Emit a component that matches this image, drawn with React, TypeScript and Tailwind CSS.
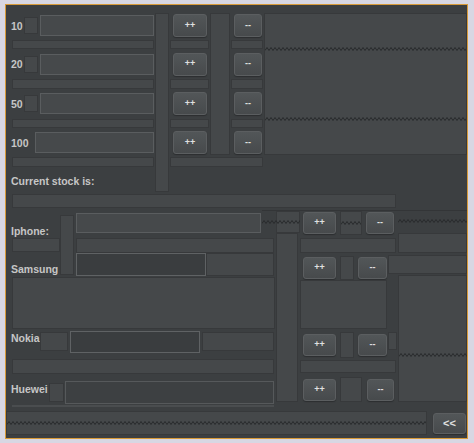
import React from "react";

const PANEL = "bg-[#45484a] border border-[#37393b]";
const FIELD = "bg-[#46494b] border border-[#5a5d5f]";
const DFIELD = "bg-[#3a3d3f] border border-[#5f6264]";
const LABEL = "text-[10.5px] leading-[14px] font-bold text-[#c6c6c6] whitespace-nowrap";

function Zig({ w, className = "" }: { w: number; className?: string }) {
  const pts: string[] = [];
  for (let x = 0, i = 0; x <= w + 2; x += 2, i++) pts.push(`${x},${i % 2 ? 1.5 : 4.5}`);
  return (
    <svg width={w} height={6} className={"block shrink-0 " + className}>
      <polyline points={pts.join(" ")} fill="none" stroke="#282a2c" strokeWidth={1} />
    </svg>
  );
}

function Btn({ t, className = "", big = false }: { t: string; className?: string; big?: boolean }) {
  return (
    <div
      className={
        "flex shrink-0 items-center justify-center rounded-[3px] border border-[#5b5e60] bg-linear-to-b from-[#525658] to-[#474a4c] font-bold text-[#e0e0e0] shadow-[0_1px_1px_#2c2e30] " +
        (big ? "text-[11px] " : "text-[9px] ") +
        className
      }
    >
      {t}
    </div>
  );
}

const denoms = [
  { label: "10", row: "row-[2/3]" },
  { label: "20", row: "row-[4/5]" },
  { label: "50", row: "row-[6/7]" },
  { label: "100", row: "row-[8/9]" },
];

const bars = [
  { row: "row-[3/4]", h: "h-[9px]" },
  { row: "row-[5/6]", h: "h-[10px]" },
  { row: "row-[7/8]", h: "h-[9px]" },
];

export default function App() {
  return (
    <div className="h-[443px] w-[474px] bg-[#d8d7e3] pb-[4px] pl-[5px] pr-[6px] pt-[4px] font-['Liberation_Sans',Arial,sans-serif]">
      <div className="flex h-full w-full flex-col border border-[#d89a38] bg-[#3c3f41]">
        {/* Section 1: denominations */}
        <div className="grid h-[188px] shrink-0 grid-cols-[148px_16px_40px_21px_33px_203px] grid-rows-[8px_25px_13px_26px_14px_25px_14px_25px_13px_25px]">
          {denoms.map((d) => (
            <React.Fragment key={d.label}>
              <div className={`col-[1/2] ${d.row} flex items-center pl-[5px]`}>
                {d.label === "100" ? (
                  <span className={`${LABEL} w-[24px]`}>{d.label}</span>
                ) : (
                  <>
                    <span className={`${LABEL} w-[13px]`}>{d.label}</span>
                    <div className={`${PANEL} h-[17px] w-[14px]`} />
                    <div className="w-[2px]" />
                  </>
                )}
                <div className={`${FIELD} h-[21px] flex-1`} />
              </div>
              <Btn t="++" className={`col-[3/4] ${d.row} ml-[3px] h-[23px] w-[34px] self-center`} />
              <Btn t="--" className={`col-[5/6] ${d.row} ml-[3px] h-[23px] w-[28px] self-center`} />
            </React.Fragment>
          ))}
          {bars.map((b) => (
            <React.Fragment key={b.row}>
              <div className={`col-[1/2] ${b.row} ${b.h} ${PANEL} ml-[6px] self-center`} />
              <div className={`col-[3/4] ${b.row} ${b.h} ${PANEL} mr-[1px] self-center`} />
              <div className={`col-[5/6] ${b.row} ${b.h} ${PANEL} mr-[1px] self-center`} />
            </React.Fragment>
          ))}
          <div className={`col-[1/2] row-[9/10] h-[10px] ${PANEL} ml-[6px] self-center`} />
          <div className={`col-[3/6] row-[9/10] h-[10px] ${PANEL} mr-[1px] self-center`} />
          <div className={`col-[2/3] row-[2/11] ${PANEL} mb-[1px] ml-[1px] w-[14px]`} />
          <div className={`col-[4/5] row-[2/9] ${PANEL} w-[20px]`} />
          <div className={`col-[6/7] row-[2/9] ${PANEL} flex flex-col`}>
            <Zig w={201} className="mt-[32px]" />
            <Zig w={201} className="mt-[64px]" />
          </div>
          <div className={`col-[1/5] row-[10/11] flex items-center pl-[5px]`}>
            <span className={LABEL}>Current stock is:</span>
          </div>
        </div>

        {/* Section 2: bar */}
        <div className="flex h-[15px] shrink-0 items-center">
          <div className={`${PANEL} ml-[6px] h-[14px] w-[384px]`} />
        </div>

        {/* Section 3: stock */}
        <div className="grid h-[197px] shrink-0 grid-cols-[54px_16px_186px_14px_24px_97px_70px] grid-rows-[29px_16px_27px_50px_27px_19px_29px]">
          {/* Iphone row */}
          <div className="col-[4/8] row-[1/2] mt-[2px] h-px bg-[#333537]" />
          <div className={`col-[2/3] row-[1/4] ${PANEL} mt-[7px] h-[60px] w-[14px]`} />
          <div className={`col-[3/4] row-[1/2] ${FIELD} mt-[5px] h-[20px] w-[185px]`} />
          <div className={`col-[5/6] row-[1/2] ${PANEL} mt-[3px] h-[22px] w-[24px]`} />
          <div className="col-[4/6] row-[1/2] pt-[11px]">
            <Zig w={38} />
          </div>
          <div className="col-[6/7] row-[1/2] flex items-center">
            <Btn t="++" className="ml-[3px] h-[22px] w-[33px]" />
            <div className={`${PANEL} ml-[4px] flex h-[24px] w-[22px] items-center overflow-hidden`}>
              <Zig w={22} />
            </div>
            <Btn t="--" className="ml-[4px] h-[22px] w-[28px]" />
          </div>
          <div className="col-[7/8] row-[1/2] pl-[1px] pt-[10px]">
            <Zig w={69} />
          </div>

          {/* bar row */}
          <div className={`col-[1/2] row-[2/3] ${PANEL} ml-[6px] mt-[1px] h-[14px] w-[48px]`} />
          <div className={`col-[3/5] row-[2/3] ${PANEL} mt-[1px] h-[15px] w-[198px]`} />
          <div className={`col-[6/7] row-[2/3] ${PANEL} mt-[1px] h-[15px] w-[96px]`} />
          <div className={`col-[7/8] row-[2/3] ${PANEL} -mt-[4px] ml-[1px] h-[20px]`} />
          <div className={`col-[5/6] row-[2/8] ${PANEL} -mt-[4px] mb-[3px] w-[22px]`} />

          {/* Samsung row */}
          <div className="col-[3/5] row-[3/4] flex items-start">
            <div className={`${DFIELD} h-[23px] w-[130px]`} />
            <div className={`${PANEL} h-[23px] w-[68px]`} />
          </div>
          <div className="col-[6/8] row-[3/4] flex items-start">
            <Btn t="++" className="ml-[3px] mt-[4px] h-[22px] w-[33px]" />
            <div className={`${PANEL} ml-[4px] mt-[3px] h-[24px] w-[14px]`} />
            <Btn t="--" className="ml-[4px] mt-[4px] h-[22px] w-[29px]" />
            <div className={`${PANEL} ml-[1px] mt-[2px] h-[19px] flex-1`} />
          </div>

          {/* big row */}
          <div className={`col-[1/5] row-[4/5] ${PANEL} -mt-[3px] mb-[1px] ml-[6px] w-[263px]`} />
          <div className={`col-[6/7] row-[4/5] ${PANEL} mb-[1px] w-[87px]`} />
          <div className={`col-[7/8] row-[4/8] ${PANEL} -mt-[5px] mb-[3px] ml-[1px] flex flex-col`}>
            <Zig w={68} className="mt-[76px]" />
          </div>

          {/* labels painted above the bars */}
          <div className="col-[1/2] row-[1/2] flex items-start pl-[5px] pt-[16px]">
            <span className={LABEL}>Iphone:</span>
          </div>
          <div className="col-[1/3] row-[3/4] flex items-start pl-[5px] pt-[9px]">
            <span className={LABEL}>Samsung</span>
          </div>

          {/* Nokia row */}
          <div className="col-[1/5] row-[5/6] flex items-start pl-[5px]">
            <span className={`${LABEL} mt-[1px] w-[29px]`}>Nokia</span>
            <div className={`${PANEL} mt-[2px] h-[19px] w-[28px]`} />
            <div className={`${DFIELD} ml-[2px] mt-[1px] h-[22px] w-[130px]`} />
            <div className={`${PANEL} ml-[2px] mt-[2px] h-[19px] w-[72px]`} />
          </div>
          <div className="col-[6/7] row-[5/6] flex items-start">
            <Btn t="++" className="ml-[3px] mt-[4px] h-[22px] w-[33px]" />
            <div className={`${PANEL} ml-[4px] mt-[2px] h-[26px] w-[14px]`} />
            <Btn t="--" className="ml-[4px] mt-[4px] h-[22px] w-[29px]" />
            <div className={`${PANEL} ml-[1px] mt-[2px] h-[18px] w-[9px]`} />
          </div>

          {/* bar row 2 */}
          <div className={`col-[1/5] row-[6/7] ${PANEL} ml-[6px] mt-[2px] h-[15px] w-[262px]`} />
          <div className={`col-[6/7] row-[6/7] ${PANEL} mt-[3px] h-[13px] w-[96px]`} />

          {/* Huewei row */}
          <div className="col-[1/5] row-[7/8] flex items-start pl-[5px]">
            <span className={`${LABEL} mt-[6px] w-[38px]`}>Huewei</span>
            <div className={`${PANEL} mt-[7px] h-[19px] w-[15px]`} />
            <div className="ml-[1px] mt-[5px] h-[23px] w-[209px] border border-[#56595b] bg-[#3d4042]" />
          </div>
          <div className="col-[6/7] row-[7/8] flex items-start">
            <Btn t="++" className="ml-[3px] mt-[3px] h-[22px] w-[33px]" />
            <div className={`${PANEL} ml-[4px] mt-[1px] h-[25px] w-[22px]`} />
            <Btn t="--" className="ml-[5px] mt-[3px] h-[22px] w-[27px]" />
          </div>
        </div>

        {/* Section 4: bottom */}
        <div className="flex flex-1 flex-col">
          <div className="ml-[6px] h-[2px] w-[262px] bg-[#4a4d4f]" />
          <div className="mt-[4px] flex items-start">
            <div className={`${PANEL} flex h-[24px] w-[421px] items-center overflow-hidden`}>
              <Zig w={420} />
            </div>
            <Btn t="<<" big className="ml-[6px] mt-[2px] h-[21px] w-[33px]" />
          </div>
        </div>
      </div>
    </div>
  );
}
